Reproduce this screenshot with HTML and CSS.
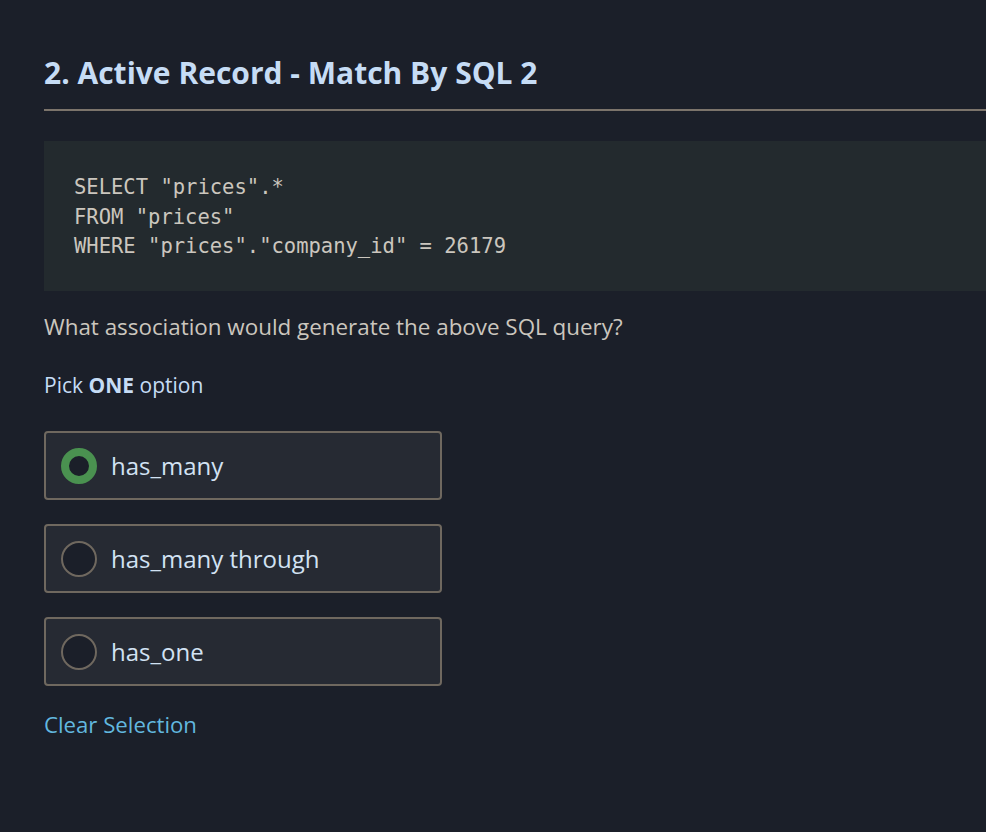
FILE: index.html
```html
<!DOCTYPE html>
<html>
<head>
<meta charset="utf-8">
<link rel="stylesheet" href="styles.css">
</head>
<body>
<div class="page">
  <h2 class="title">2. Active Record - Match By SQL 2</h2>
  <hr class="rule">
  <pre class="code">SELECT "prices".*
FROM "prices"
WHERE "prices"."company_id" = 26179</pre>
  <p class="question">What association would generate the above SQL query?</p>
  <p class="pick">Pick <strong>ONE</strong> option</p>
  <div class="options">
    <label class="option"><span class="radio checked"></span><span class="label">has_many</span></label>
    <label class="option"><span class="radio"></span><span class="label">has_many through</span></label>
    <label class="option"><span class="radio"></span><span class="label">has_one</span></label>
  </div>
  <a class="clear">Clear Selection</a>
</div>
</body>
</html>
```
FILE: styles.css
```css
html, body {
  margin: 0;
  padding: 0;
  background: #1b1f29;
  overflow: hidden;
}
body {
  font-family: "Open Sans", "Noto Sans", sans-serif;
}
.page {
  padding: 51px 0 0 44px;
}
.title {
  margin: 0;
  font-size: 30px;
  font-weight: 700;
  color: #c6dcf5;
  line-height: 44px;
}
.rule {
  margin: 14px 0 0 0;
  border: none;
  height: 2px;
  background: #7c746b;
}
.code {
  margin: 30px 0 0 0;
  background: #232a2e;
  padding: 32px 30px 25px;
  font-family: "DejaVu Sans Mono", monospace;
  font-size: 20.5px;
  line-height: 29.5px;
  color: #cbc6be;
  height: 93px;
}
.question {
  margin: 21px 0 0;
  font-size: 22.4px;
  line-height: 30px;
  color: #cbc6be;
}
.pick {
  margin: 29px 0 0;
  font-size: 21px;
  line-height: 28px;
  color: #c6dcf5;
}
.pick strong {
  font-weight: 700;
}
.options {
  margin-top: 32px;
  display: flex;
  flex-direction: column;
  gap: 24px;
  width: 398px;
}
.option {
  box-sizing: border-box;
  height: 69px;
  display: flex;
  align-items: center;
  gap: 14px;
  padding-left: 15px;
  background: #262a33;
  border: 2px solid #6f685f;
  border-radius: 4px;
}
.radio {
  box-sizing: border-box;
  width: 36px;
  height: 36px;
  border-radius: 50%;
  border: 2px solid #6f685f;
  background: #1b1f29;
}
.radio.checked {
  border: 8px solid #4a9150;
}
.label {
  font-size: 24px;
  color: #d2e2f3;
  line-height: 30px;
}
.clear {
  display: inline-block;
  margin-top: 24px;
  font-size: 22.2px;
  line-height: 30px;
  color: #62b7df;
}
```
